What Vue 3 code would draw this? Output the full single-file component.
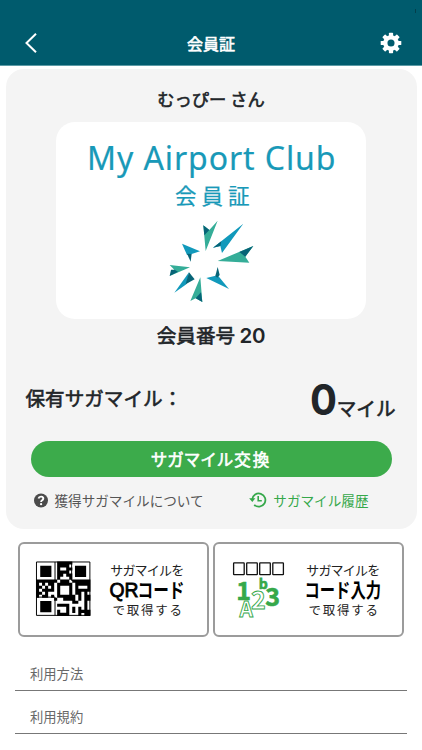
<script setup>
const links = ['利用方法', '利用規約']
const teeth = [0, 45, 90, 135, 180, 225, 270, 315]
const modules = [
  '.......#####......',
  '.......####.......',
  '.......#..##......',
  '.......####.......',
  '.......##.##......',
  '.......#...#......',
  '#######.###.######',
  '#.#.##.#####.#####',
  '##.#.#.#...#.#...#',
  '#.####.#...#.#####',
  '##.#...#...#.##.#.',
  '#.##.#.######.#.##',
  '......#..####.#.##',
  '............##..#.',
  '.......####.....#.',
  '..........#.#.#.#.',
  '.......#..#.#.####',
  '.......####...#.##',
]
const qr = modules
  .flatMap((row, y) => [...row].map((m, x) => (m === '#' ? `M${x} ${y}h1.02v1.02h-1.02z` : '')))
  .join('')
</script>

<template>
  <div class="screen">
    <header class="header">
      <svg class="back" width="12" height="20" viewBox="0 0 12 20"><path d="M11 .8 1.5 10 11 19.2" fill="none" stroke="#fff" stroke-width="2" /></svg>
      <h1>会員証</h1>
      <svg class="gear" width="22" height="22" viewBox="-11 -11 22 22">
        <rect v-for="a in teeth" :key="a" x="-2.1" y="-10.3" width="4.2" height="5" rx=".7" fill="#fff" :transform="`rotate(${a})`" />
        <circle r="5.7" fill="none" stroke="#fff" stroke-width="4.3" />
      </svg>
      <i class="speck"></i>
    </header>

    <main class="panel">
      <p class="name">むっぴー さん</p>
      <svg class="card" width="310" height="197" viewBox="56 122 310 197">
        <g fill="#1899b8" class="art">
          <text x="87" y="170" font-size="32" textLength="248.5" class="latin">My Airport Club</text>
          <text x="175" y="204.4" font-size="21.5" textLength="74.5" class="sub">会員証</text>
        </g>
        <g transform="translate(150 210) scale(.3333)">
          <g fill="#35ad98">
            <path d="M203 32 167 123 160 46 178 60Z" /><path d="M310 108 203 153 298 158 286 140Z" />
            <path d="M120 172 59 165 73 179 59 198Z" /><path d="M151 202 121 273 137 265 157 276Z" />
          </g>
          <g fill="#1199bb">
            <path d="M280 41 189 113 211 108 216 129Z" /><path d="M150 124 96 101 111 135 125 132Z" />
            <path d="M117 187 73 248 109 223 113 209Z" /><path d="M169 204 203 196 237 237Z" />
          </g>
          <g fill="#076477">
            <path d="M160 46 178 60 163 76Z" /><path d="M214 94 189 113 211 108Z" />
            <path d="M310 108 268 126 286 140Z" /><path d="M111 131 125 132 122 155Z" />
            <path d="M63 179 74 179 84 185 59 198Z" /><path d="M117 187 107 223 134 208Z" />
            <path d="M153 247 137 265 157 276Z" /><path d="M203 171 196 198 202 203 209 195Z" />
          </g>
        </g>
      </svg>
      <p class="number">会員番号 <span>20</span></p>
      <div class="balance">
        <span class="label">保有サガマイル：</span>
        <span class="amount"><svg width="27" height="46" viewBox="0 0 27 46"><text x="0" y="37" font-size="42" textLength="27" lengthAdjust="spacingAndGlyphs">0</text></svg><span>マイル</span></span>
      </div>
      <button class="exchange">サガマイル<span>交換</span></button>
      <div class="help">
        <a class="about">
          <svg width="14" height="15" viewBox="0 0 14 15"><circle cx="7" cy="7.5" r="7" fill="#4b4b4b" /><path d="M4.5 5.5Q5 3.5 7.2 3.6 9.4 3.8 9.3 5.7 9.2 6.8 7.9 7.5 7.1 8 7.1 9" fill="none" stroke="#fff" stroke-width="1.9" /><circle cx="7.1" cy="11.2" r="1.15" fill="#fff" /></svg>
          <span>獲得サガマイルについて</span>
        </a>
        <a class="history">
          <svg width="18" height="16" viewBox="0 0 18 16"><path d="M3.2 7.4A6.6 6.6 0 1 1 5.2 12.8" fill="none" stroke="#35a84a" stroke-width="1.8" /><path d="M.1 6.3H6.4L3.3 10Z" fill="#35a84a" /><path d="M9.2 4.1V8.7H12.8" fill="none" stroke="#35a84a" stroke-width="1.6" /></svg>
          <span>サガマイル履歴</span>
        </a>
      </div>
    </main>

    <section class="codes">
      <button class="code">
        <svg width="187" height="91" viewBox="20 544 187 91">
          <g transform="translate(36 561.5) scale(3.02)">
            <path :d="qr" />
            <g fill="none" stroke="#000" stroke-width=".32">
              <path d="M.16 .16H17.84V17.84H.16Z" />
              <path d="M6.3 .16V6.3H.16M11.8 .16V6.3H17.84M.16 11.8H6.3V17.84" />
            </g>
            <path d="M1.4 1.4H5.1V5.1H1.4ZM12.9 1.4H16.6V5.1H12.9ZM1.4 13.1H5.1V16.8H1.4Z" />
          </g>
          <g class="art">
            <text x="110.2" y="575.3" font-size="13" textLength="74" class="light">サガマイルを</text>
            <text x="109.5" y="597.3" font-size="20" textLength="29" lengthAdjust="spacingAndGlyphs" class="qr">QR</text>
            <text x="137.5" y="597.5" font-size="20" textLength="47" lengthAdjust="spacingAndGlyphs" class="strong">コード</text>
            <text x="112.5" y="614.8" font-size="12.5" textLength="69.5" class="light">で取得する</text>
          </g>
        </svg>
      </button>
      <button class="code">
        <svg width="187" height="91" viewBox="215 544 187 91">
          <g fill="none" stroke="#111" stroke-width="1.3">
            <rect v-for="x in [233.6, 246.7, 259.7, 272.8]" :key="x" :x="x" y="562.9" width="10.6" height="11.8" rx=".5" />
          </g>
          <g class="art" fill="#35a84a">
            <g stroke="#35a84a" stroke-width=".6">
              <text x="236.3" y="599.5" font-size="25" font-weight="700">1</text>
              <text x="258.8" y="588.6" font-size="14" font-weight="700">b</text>
              <text x="265.2" y="605.7" font-size="25" font-weight="700">3</text>
            </g>
            <g fill="#fff" stroke="#35a84a" stroke-width=".9">
              <text x="251" y="609.2" font-size="25" font-weight="700">2</text>
              <text x="239.6" y="617" font-size="21" font-weight="700">A</text>
            </g>
          </g>
          <g class="art">
            <text x="306.2" y="575.3" font-size="13" textLength="74" class="light">サガマイルを</text>
            <text x="304.5" y="597.5" font-size="20" textLength="76.5" lengthAdjust="spacingAndGlyphs" class="strong">コード入力</text>
            <text x="308.5" y="614.8" font-size="12.5" textLength="69.5" class="light">で取得する</text>
          </g>
        </svg>
      </button>
    </section>

    <nav class="links">
      <a v-for="link in links" :key="link">{{ link }}</a>
    </nav>
  </div>
</template>

<style>
body { margin: 0; background: #fff; }
</style>

<style scoped>
* { box-sizing: border-box; }
.screen { width: 422px; height: 750px; overflow: hidden; background: #fff; color: #212529; font-family: 'Noto Sans CJK JP', sans-serif; }
.header { position: relative; height: 66px; padding: 20px 20px 0 25px; background: #005b6d; border-bottom: 1px solid #5c9ba6; display: grid; grid-template-columns: 22px 1fr 22px; align-items: center; }
h1 { margin: 0; padding-right: 5px; color: #fff; font-size: 16px; line-height: 24px; text-align: center; font-weight: 400; -webkit-text-stroke: .6px #fff; }
.speck { position: absolute; right: 6px; top: 9px; width: 1px; height: 4px; background: #043f4b; }
.panel { width: 411px; height: 460px; margin: 3px 0 0 5.5px; padding-top: 16px; border-radius: 18px; background: #f4f4f4; display: flex; flex-direction: column; align-items: center; }
p { margin: 0; }
.name, .number, .balance { font-weight: 400; -webkit-text-stroke: .6px #212529; }
.name { height: 37px; font-size: 17.3px; line-height: 27px; }
.card { display: block; flex: none; background: #fff; border-radius: 19px; }
.art { font-family: 'Noto Sans CJK JP', sans-serif; }
.latin { font-family: 'Noto Sans', sans-serif; stroke: #1899b8; stroke-width: .2px; }
.sub { stroke: #1899b8; stroke-width: .25px; }
.strong { font-weight: 700; }
.qr { font-family: 'Liberation Sans', sans-serif; stroke: #000; stroke-width: .8px; }
.light { fill: #222; }
.number { height: 54px; font-size: 19.6px; line-height: 32px; }
.number span { font-family: Inter, sans-serif; font-size: 20.5px; font-weight: 600; letter-spacing: -.3px; -webkit-text-stroke: 0; }
.balance { width: 371px; height: 68px; display: flex; justify-content: space-between; line-height: 49px; font-size: 19.6px; white-space: nowrap; }
.amount { display: flex; align-items: flex-start; font-size: 19.6px; }
.amount svg { flex: none; margin-top: 5px; }
.amount svg text { font-family: Inter, sans-serif; font-weight: 700; fill: #212529; -webkit-text-stroke: 0; }
.amount > span { line-height: 69px; margin-right: 1px; }
button { padding: 0; font: inherit; }
.exchange { flex: none; width: 361px; height: 36px; border: 0; border-radius: 18px; background: #3cab4b; color: #fff; font-size: 16.5px; line-height: 36px; -webkit-text-stroke: .6px #fff; }
.exchange span { letter-spacing: 2px; margin-left: 1px; }
.help { width: 371px; padding: 11px 28px 0 8px; display: flex; justify-content: space-between; font-size: 13.6px; line-height: 24px; }
.help a { display: flex; align-items: center; white-space: nowrap; }
.about { gap: 7px; color: #555; }
.history { gap: 6px; color: #35a84a; }
.codes { padding: 13px 17px 0 18px; display: flex; gap: 4px; }
.code { width: 191px; height: 95px; border: 2px solid #9b9b9b; border-radius: 6px; background: #fff; }
.code svg { display: block; width: 187px; height: 91px; }
.links { margin: 11px 15px 0; }
.links a { display: block; height: 43px; padding: 12px 15px 0; border-bottom: 1px solid #777; color: #686868; font-size: 13.3px; line-height: 28px; }
</style>
